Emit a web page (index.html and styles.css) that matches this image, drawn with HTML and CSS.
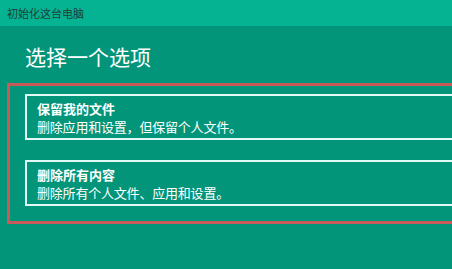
FILE: index.html
```html
<!DOCTYPE html>
<html lang="zh-CN">
<head>
<meta charset="utf-8">
<title>初始化这台电脑</title>
<link rel="stylesheet" href="styles.css">
</head>
<body>
<div class="titlebar">初始化这台电脑</div>
<h1 class="heading">选择一个选项</h1>
<div class="highlight">
  <div class="option">
    <div class="option-title">保留我的文件</div>
    <div class="option-desc">删除应用和设置，但保留个人文件。</div>
  </div>
  <div class="option">
    <div class="option-title">删除所有内容</div>
    <div class="option-desc">删除所有个人文件、应用和设置。</div>
  </div>
</div>
</body>
</html>
```
FILE: styles.css
```css
html, body {
  margin: 0;
  padding: 0;
  width: 452px;
  height: 269px;
  overflow: hidden;
  background: #03957a;
  font-family: "Noto Sans CJK SC", "Microsoft YaHei", sans-serif;
  color: #ffffff;
}
.titlebar {
  height: 26px;
  line-height: 26px;
  background: #05b393;
  color: #1f3d36;
  font-size: 11px;
  padding-left: 7px;
}
.heading {
  margin: 18px 0 0 25px;
  font-size: 21px;
  line-height: 25px;
  font-weight: normal;
}
.highlight {
  margin: 14px 0 0 7px;
  border: 3px solid #c95a5a;
  border-right: none;
  padding: 8px 0 15px 15px;
  display: flex;
  flex-direction: column;
  gap: 20px;
}
.option {
  border: 2px solid #e2faf5;
  border-right: none;
  padding: 4px 0 2px 10px;
}
.option-title {
  font-size: 13px;
  line-height: 18px;
  font-weight: bold;
}
.option-desc {
  font-size: 13px;
  line-height: 18px;
  letter-spacing: -0.2px;
}
```
